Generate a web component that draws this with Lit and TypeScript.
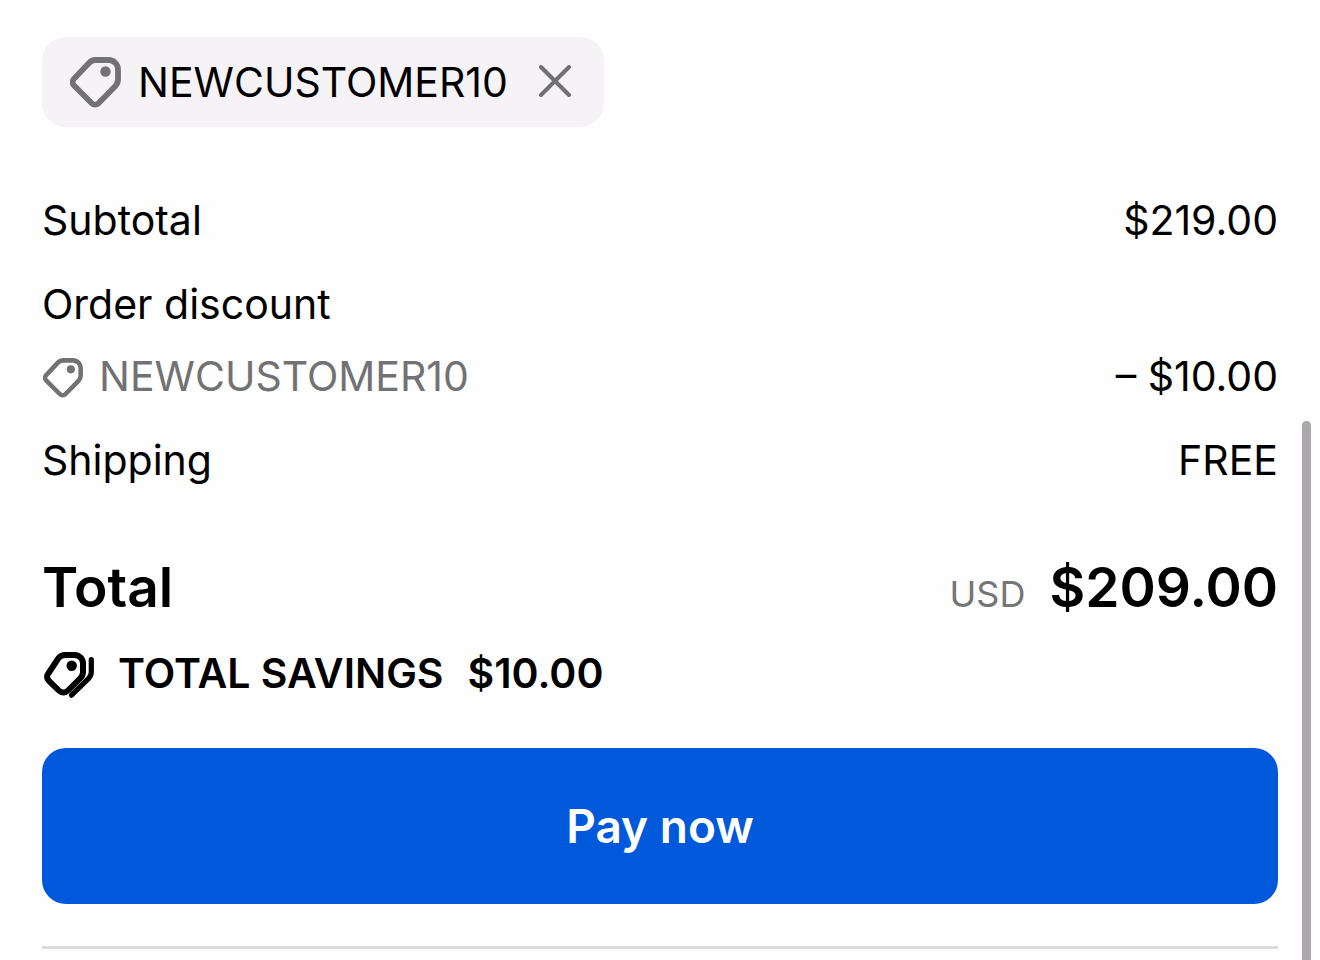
import { LitElement, html, css, svg } from "lit";
import { customElement, property } from "lit/decorators.js";

const tagShape = svg`
  <path d="M25.500 3H38.500a9.500 9.500 0 0 1 9.500 9.500v10c0 2.500-1 4.900-2.800 6.700L28.500 46.200a4.800 4.800 0 0 1-6.800 0L4 28.500a4.800 4.800 0 0 1-.1-6.600L19 5.900A9 9 0 0 1 25.500 3z"
    fill="none" stroke="currentColor" stroke-width="5.800" stroke-linejoin="round"/>
  <circle cx="35.500" cy="14.500" r="5.200" fill="currentColor"/>`;

@customElement("tag-icon")
export class TagIcon extends LitElement {
  static styles = css`
    :host { display: block; flex: none; }
    svg { display: block; width: 100%; height: 100%; }
  `;
  render() {
    return html`<svg viewBox="0 0 51 51" aria-hidden="true">${tagShape}</svg>`;
  }
}

@customElement("discount-chip")
export class DiscountChip extends LitElement {
  static styles = css`
    :host {
      display: inline-flex;
      align-items: center;
      box-sizing: border-box;
      padding: 15px 24px 15px 28px;
      border-radius: 24px;
      background: #f5f3f6;
      color: #000;
      font-size: 41px;
      line-height: 60px;
    }
    .tag { width: 51px; height: 51px; color: #727174; margin-right: 17px; }
    .remove {
      display: flex;
      margin-left: 22px;
      padding: 8px;
      border: 0;
      background: none;
      color: #707073;
      cursor: pointer;
    }
    .cross { display: block; width: 34px; height: 34px; }
  `;
  @property() code = "";
  render() {
    return html`
      <tag-icon class="tag"></tag-icon>
      <span>${this.code}</span>
      <button class="remove" type="button" aria-label="Remove ${this.code}">
        <svg class="cross" viewBox="0 0 34 34" aria-hidden="true">
          <path d="M3 2l28 28M31 2L3 30" fill="none" stroke="currentColor" stroke-width="4" stroke-linecap="round"/>
        </svg>
      </button>`;
  }
}

@customElement("app-root")
export class AppRoot extends LitElement {
  static styles = css`
    :host {
      display: block;
      position: relative;
      box-sizing: border-box;
      min-height: 100vh;
      padding: 37px 42px 0;
      background: #fefefe;
      color: #000;
      font-family: Inter, "Liberation Sans", sans-serif;
      font-size: 41px;
      line-height: 60px;
    }
    .chips { display: flex; margin-bottom: 63px; }
    .costs { margin: 0; display: flex; flex-direction: column; gap: 24px; }
    .row { display: flex; justify-content: space-between; align-items: center; }
    .row dt, .row dd { margin: 0; }
    .group { display: flex; flex-direction: column; gap: 12px; }
    .code { display: flex; align-items: center; gap: 16px; color: #727174; }
    .code-tag { width: 40px; height: 40px; padding: 4px 0 0 1px; }
    .total {
      margin-top: 37px;
      font-size: 55px;
      font-weight: 600;
      line-height: 72px;
    }
    .amount { display: flex; align-items: baseline; gap: 24px; }
    .currency { color: #757578; font-size: 36px; font-weight: 400; line-height: 48px; }
    .savings {
      display: flex;
      align-items: center;
      margin: 20px 0 45px;
      font-weight: 600;
    }
    .savings-icon { display: block; flex: none; width: 54px; height: 52px; margin-right: 22px; }
    .savings-label { margin-right: 24px; }
    .pay {
      display: block;
      width: 100%;
      padding: 48px 24px;
      border: 0;
      border-radius: 24px;
      background: #0059db;
      color: #fff;
      font: 600 46px/60px Inter, "Liberation Sans", sans-serif;
      cursor: pointer;
    }
    .divider { margin: 42px 0 0; border: 0; border-top: 3px solid #dcdbdd; }
    .scroll-thumb {
      position: absolute;
      top: 421px;
      right: 9px;
      bottom: 0;
      width: 9px;
      border-radius: 5px 5px 0 0;
      background: #aaa8ab;
    }
  `;

  render() {
    return html`
      <main>
        <div class="chips"><discount-chip code="NEWCUSTOMER10"></discount-chip></div>
        <dl class="costs">
          <div class="row"><dt>Subtotal</dt><dd>$219.00</dd></div>
          <div class="group">
            <div class="row"><dt>Order discount</dt></div>
            <div class="row">
              <dt class="code"><tag-icon class="code-tag"></tag-icon>NEWCUSTOMER10</dt>
              <dd>– $10.00</dd>
            </div>
          </div>
          <div class="row"><dt>Shipping</dt><dd>FREE</dd></div>
          <div class="row total">
            <dt>Total</dt>
            <dd class="amount"><span class="currency">USD</span>$209.00</dd>
          </div>
        </dl>
        <div class="savings">
          <svg class="savings-icon" viewBox="-1 -5 54 52" aria-hidden="true">
            <path d="M22 3H31.500a8.500 8.500 0 0 1 8.500 8.500v8.500c0 2.300-.9 4.400-2.500 6L25 38.500a6.500 6.500 0 0 1-9.200 0L5.700 28.700a5.500 5.500 0 0 1-.1-7.700L15.800 5.700A8.500 8.500 0 0 1 22 3z"
              fill="none" stroke="currentColor" stroke-width="6" stroke-linejoin="round"/>
            <circle cx="28.700" cy="13.700" r="5.200" fill="currentColor"/>
            <path d="M48.300 7.500V20c0 2.400-.9 4.600-2.600 6.300L28.500 43.200" fill="none" stroke="currentColor" stroke-width="5.200" stroke-linecap="round"/>
          </svg>
          <span class="savings-label">TOTAL SAVINGS</span>
          <span>$10.00</span>
        </div>
        <button class="pay" type="button">Pay now</button>
        <hr class="divider" />
      </main>
      <div class="scroll-thumb" aria-hidden="true"></div>`;
  }
}
